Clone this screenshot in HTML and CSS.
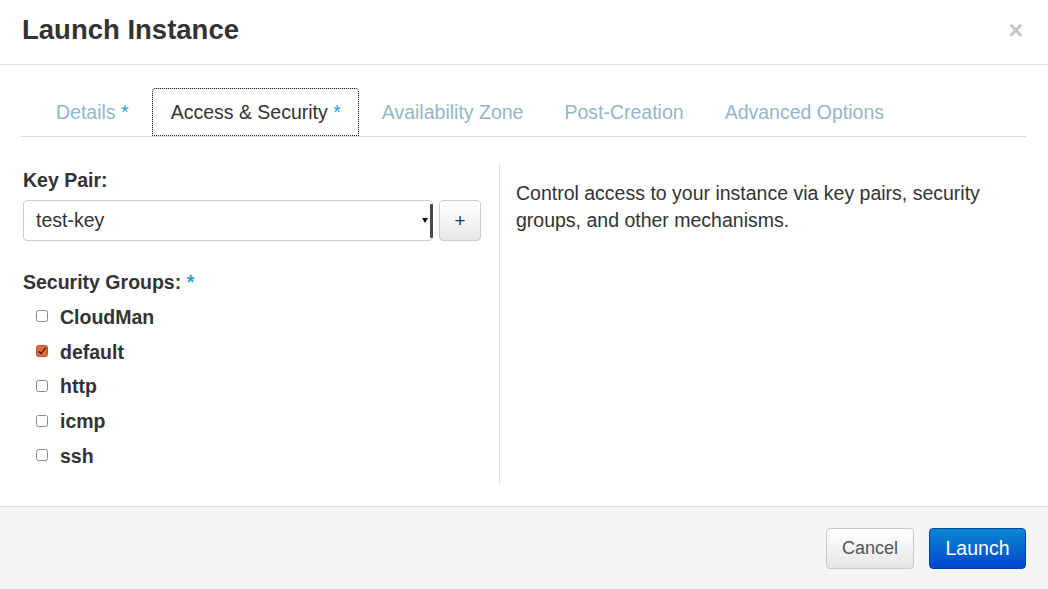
FILE: index.html
```html
<!DOCTYPE html>
<html>
<head>
<meta charset="utf-8">
<title>Launch Instance</title>
<link rel="stylesheet" href="styles.css">
</head>
<body>
<div class="modal">
  <div class="modal-header">
    <h3 class="title">Launch Instance</h3>
    <span class="close">×</span>
  </div>
  <div class="modal-body">
    <ul class="tabs">
      <li class="tab"><a>Details <span class="req">*</span></a></li>
      <li class="tab active"><a>Access &amp; Security <span class="req">*</span></a></li>
      <li class="tab"><a>Availability Zone</a></li>
      <li class="tab"><a>Post-Creation</a></li>
      <li class="tab"><a>Advanced Options</a></li>
    </ul>
    <div class="tab-content">
      <div class="left">
        <label class="field-label">Key Pair:</label>
        <div class="keypair-row">
          <div class="select">test-key<span class="arrow"></span></div>
          <button class="btn btn-plus">+</button>
        </div>
        <label class="field-label groups-label">Security Groups: <span class="req">*</span></label>
        <ul class="checks">
          <li class="check"><svg class="box" width="12" height="12" viewBox="0 0 12 12"><rect x="0.5" y="0.5" width="11" height="11" rx="2" fill="#fff" stroke="#8c8c8c"/></svg><span>CloudMan</span></li>
          <li class="check"><svg class="box" width="12" height="12" viewBox="0 0 12 12"><rect x="0.5" y="0.5" width="11" height="11" rx="2" fill="#e8683d" stroke="#b9532f"/><path d="M2.6 6.2 L5 8.6 L9.8 2.6" fill="none" stroke="#3b2a24" stroke-width="1.5"/></svg><span>default</span></li>
          <li class="check"><svg class="box" width="12" height="12" viewBox="0 0 12 12"><rect x="0.5" y="0.5" width="11" height="11" rx="2" fill="#fff" stroke="#8c8c8c"/></svg><span>http</span></li>
          <li class="check"><svg class="box" width="12" height="12" viewBox="0 0 12 12"><rect x="0.5" y="0.5" width="11" height="11" rx="2" fill="#fff" stroke="#8c8c8c"/></svg><span>icmp</span></li>
          <li class="check"><svg class="box" width="12" height="12" viewBox="0 0 12 12"><rect x="0.5" y="0.5" width="11" height="11" rx="2" fill="#fff" stroke="#8c8c8c"/></svg><span>ssh</span></li>
        </ul>
      </div>
      <div class="right">
        <p class="help">Control access to your instance via key pairs, security groups, and other mechanisms.</p>
      </div>
    </div>
  </div>
  <div class="modal-footer">
    <button class="btn btn-cancel">Cancel</button>
    <button class="btn btn-launch">Launch</button>
  </div>
</div>
</body>
</html>
```

FILE: styles.css
```css
* { box-sizing: border-box; }
html, body { margin: 0; padding: 0; }
body {
  width: 1048px;
  height: 589px;
  overflow: hidden;
  background: #fff;
  font-family: "Liberation Sans", Arial, sans-serif;
  color: #333;
}
.modal {
  display: flex;
  flex-direction: column;
  height: 589px;
}
.modal-header {
  display: flex;
  align-items: center;
  justify-content: space-between;
  padding: 16px 25px 20px 22px;
  border-bottom: 1px solid #e5e5e5;
}
.title {
  margin: 0;
  font-size: 27.5px;
  line-height: 28px;
  font-weight: bold;
  color: #333;
}
.close {
  font-size: 25px;
  line-height: 28px;
  font-weight: bold;
  color: #c4c4c4;
}
.modal-body {
  flex: 1;
  padding: 23px 22px 0 21px;
}
.tabs {
  display: flex;
  list-style: none;
  margin: 0;
  padding: 0 0 0 16px;
  border-bottom: 1px solid #ddd;
}
.tab {
  margin-right: 4px;
  margin-bottom: -1px;
}
.tab.active { margin-left: 1px; }
.tab a {
  display: block;
  padding: 0 17px 0 18px;
  height: 49px;
  line-height: 47px;
  font-size: 19.5px;
  color: #93b6c9;
  border: 1px solid transparent;
  border-radius: 4px 4px 0 0;
}
.tab.active a {
  color: #333;
  background: #fff;
  border-color: #ddd #ddd transparent;
  outline: 1px dotted #222;
  outline-offset: -1px;
  height: 48px;
}
.req { color: #2d9fd9; }
.tab-content {
  display: grid;
  grid-template-columns: 477px 1fr;
  margin-top: 27px;
  padding-left: 2px;
}
.left {
  border-right: 1px solid #ddd;
  padding: 3px 17px 10px 0;
}
.field-label {
  display: block;
  font-size: 19.5px;
  line-height: 26px;
  font-weight: bold;
  color: #333;
}
.keypair-row {
  display: flex;
  gap: 6px;
  margin-top: 7px;
}
.select {
  position: relative;
  width: 410px;
  height: 41px;
  border: 1px solid #ccc;
  border-radius: 4px;
  padding-left: 12px;
  font-size: 19.5px;
  line-height: 39px;
  color: #333;
  background: #fff;
}
.select::after {
  content: "";
  position: absolute;
  right: -1px;
  top: 3px;
  bottom: 2px;
  width: 3px;
  background: #4a4a4a;
  border-radius: 1px;
}
.arrow {
  position: absolute;
  right: 4px;
  top: 17px;
  width: 0;
  height: 0;
  border-left: 3.5px solid transparent;
  border-right: 3.5px solid transparent;
  border-top: 5px solid #111;
}
.btn {
  font-family: "Liberation Sans", Arial, sans-serif;
  border-radius: 4px;
  cursor: pointer;
}
.btn-plus {
  width: 42px;
  height: 41px;
  padding: 0;
  font-size: 19px;
  color: #333;
  border: 1px solid #ccc;
  background: linear-gradient(#ffffff, #e8e8e8);
}
.groups-label { margin-top: 28px; }
.checks {
  list-style: none;
  margin: 5px 0 0;
  padding: 0 0 0 13px;
}
.check {
  display: flex;
  align-items: center;
  height: 34.75px;
}
.box { flex: none; margin-right: 12px; margin-top: -2px; }
.check span {
  font-size: 19.5px;
  font-weight: bold;
  color: #333;
}
.right { padding: 16px 0 0 16px; }
.help {
  margin: 0;
  font-size: 19.5px;
  line-height: 27px;
  color: #333;
}
.modal-footer {
  display: flex;
  justify-content: flex-end;
  gap: 15px;
  height: 83px;
  padding: 21px 22px 0 0;
  background: #f5f5f5;
  border-top: 1px solid #ddd;
}
.btn-cancel {
  width: 88px;
  height: 41px;
  font-size: 18px;
  color: #555;
  border: 1px solid #c8c8c8;
  background: linear-gradient(#ffffff, #e6e6e6);
}
.btn-launch {
  width: 97px;
  height: 41px;
  font-size: 19.5px;
  color: #fff;
  border: 1px solid #0040b0;
  background: linear-gradient(#0a88d2, #0046cc);
}
```
